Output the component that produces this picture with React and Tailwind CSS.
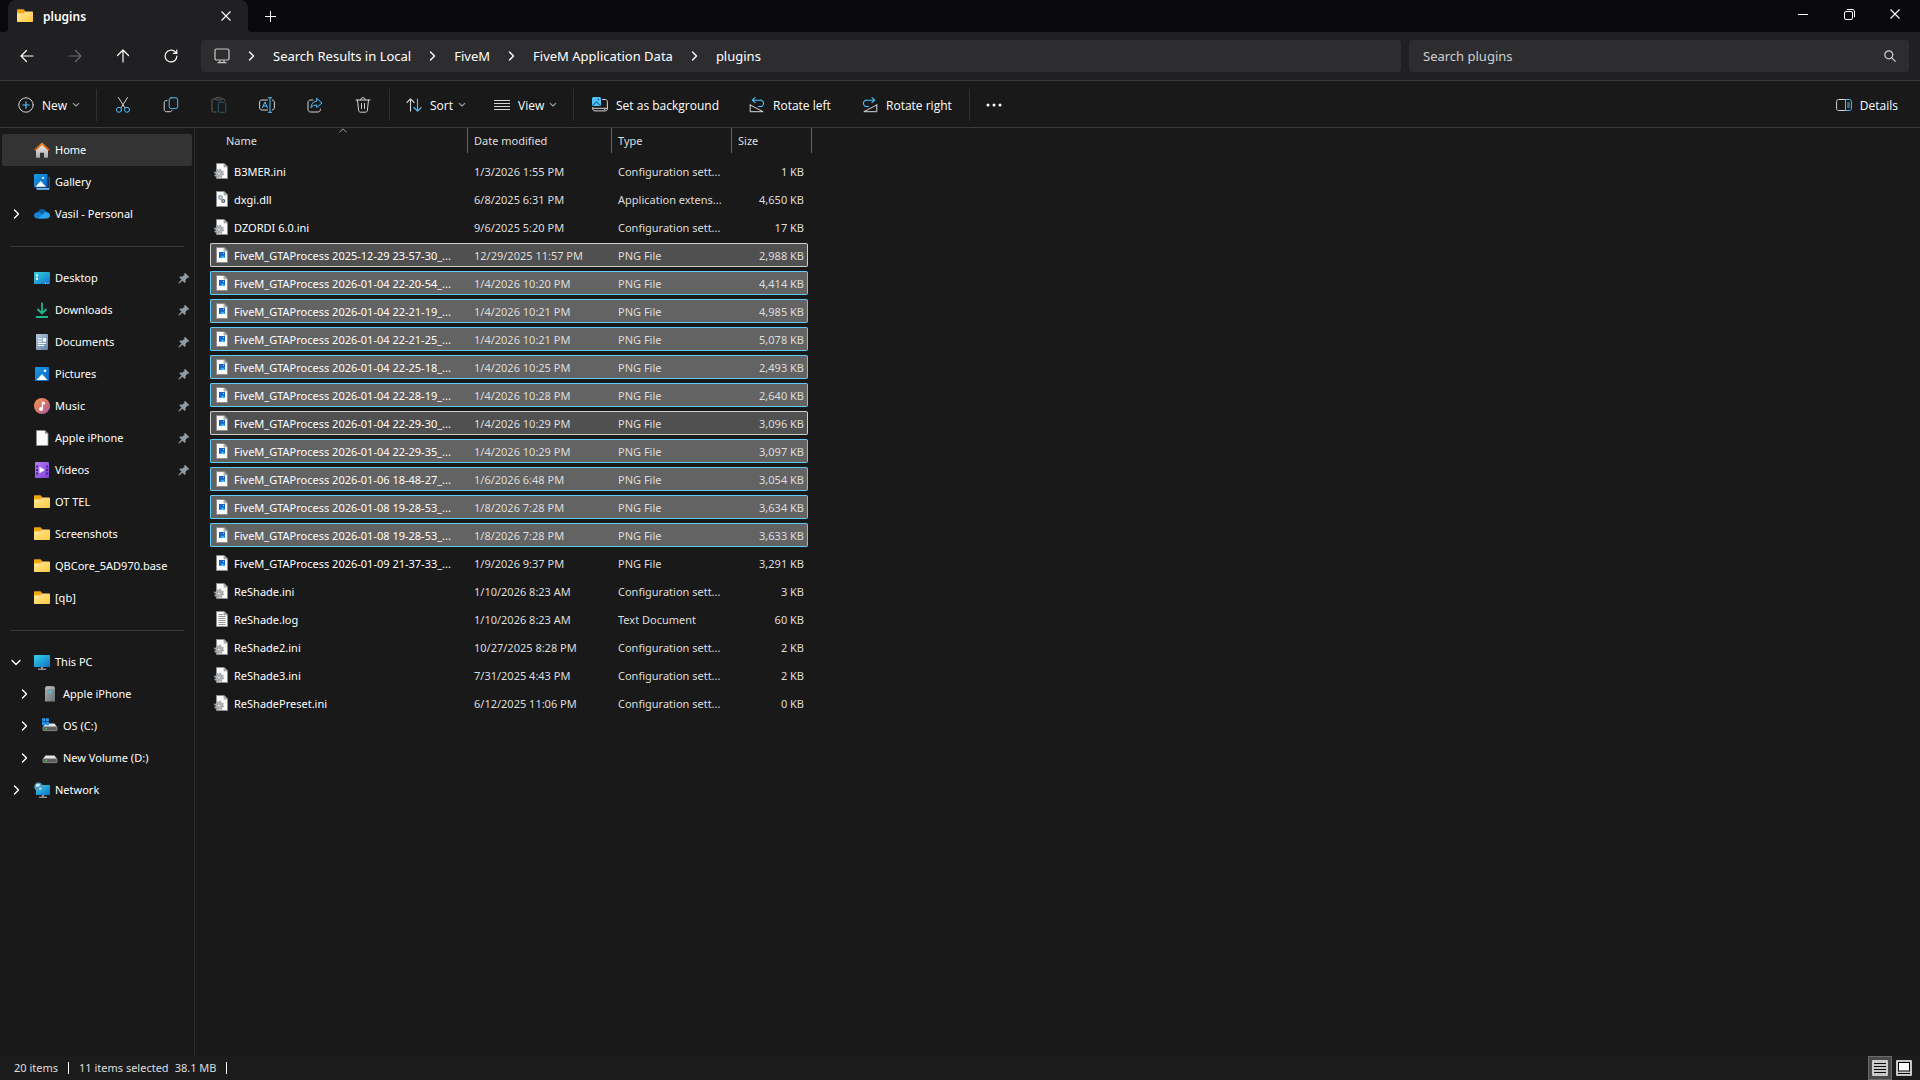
import React from 'react';

const toolbarBlue = '#4cc2ff';

// ---------- line icons ----------

const Svg = ({ size = 16, className = '', children, ...rest }) => (
  <svg width={size} height={size} viewBox="0 0 16 16" fill="none" stroke="currentColor" strokeLinecap="round" strokeLinejoin="round" aria-hidden="true" className={`shrink-0 ${className}`} {...rest}>
    {children}
  </svg>
);

const Chevron = ({ size = 12, className = '' }) => (
  <svg width={size} height={size} viewBox="0 0 12 12" fill="none" stroke="currentColor" strokeWidth="1.4" strokeLinecap="round" strokeLinejoin="round" aria-hidden="true" className={`shrink-0 ${className}`}>
    <path d="M4.500 2l4 4-4 4" />
  </svg>
);

const ChevronDown = () => (
  <svg width="8" height="8" viewBox="0 0 8 8" fill="none" stroke="#a0a0a0" strokeWidth="1.1" strokeLinecap="round" strokeLinejoin="round" aria-hidden="true" className="shrink-0">
    <path d="M1.2 2.3L4 5l2.800-2.700" />
  </svg>
);

const CloseIcon = ({ size = 10 }) => (
  <svg width={size} height={size} viewBox="0 0 10 10" stroke="currentColor" strokeWidth="1.1" aria-hidden="true">
    <path d="M.5.5l9 9M9.5.5l-9 9" />
  </svg>
);

const BackIcon = () => (
  <Svg strokeWidth="1.2"><path d="M14 8H2.2M7.5 2.5L2 8l5.5 5.5" /></Svg>
);

const ForwardIcon = () => (
  <Svg strokeWidth="1.2"><path d="M2 8h11.8M8.5 2.5L14 8l-5.5 5.5" /></Svg>
);

const UpIcon = () => (
  <Svg strokeWidth="1.2"><path d="M8 14V2.2M2.5 7.5L8 2l5.5 5.5" /></Svg>
);

const RefreshIcon = () => (
  <Svg strokeWidth="1.2"><path d="M13.9 8A5.9 5.9 0 1 1 12 3.7l1.6 1.6M13.8 2v3.4h-3.4" /></Svg>
);

const MonitorIcon = () => (
  <Svg stroke="#c8c8c8" strokeWidth="1.2"><path d="M2.6 1h10.8C14.400 1 15 1.700 15 2.600v7.800c0 .9-.6 1.600-1.600 1.600H2.600C1.600 12 1 11.300 1 10.400V2.600C1 1.700 1.600 1 2.600 1zM6 12.200v2M10 12.200v2M4 14.700h8" /></Svg>
);

const NewIcon = () => (
  <Svg stroke="#d6d6d6">
    <circle cx="8" cy="8" r="7.2" />
    <path stroke={toolbarBlue} strokeWidth="1.2" d="M8 4.800v6.400M4.800 8h6.400" />
  </Svg>
);

const CutIcon = () => (
  <Svg stroke="#d6d6d6">
    <path d="M3.500.6l6.300 10M12.500.6l-6.300 10" />
    <circle cx="4" cy="12.800" r="2.500" stroke={toolbarBlue} />
    <circle cx="12" cy="12.800" r="2.500" stroke={toolbarBlue} />
  </Svg>
);

const CopyIcon = () => (
  <Svg>
    <path stroke="#d6d6d6" d="M4 3.700H3C1.900 3.700 1.200 4.500 1.200 5.500v7c0 1.300.9 2.200 2.200 2.200h3.800c.8 0 1.500-.5 1.700-1.300" />
    <rect x="6.200" y=".8" width="8.500" height="10.800" rx="2" stroke={toolbarBlue} />
  </Svg>
);

const PasteIcon = () => (
  <Svg>
    <path stroke="#606060" d="M4.500 2H2.300C1.500 2 1 2.500 1 3.300v10.400c0 .8.5 1.300 1.300 1.300h2.900M11 2h1.500c.8 0 1.300.5 1.300 1.300M5.500.7h4c.6 0 1 .4 1 1s-.4 1.300-1 1.300h-4c-.6 0-1-.6-1-1.300s.4-1 1-1z" />
    <rect x="7.300" y="5.300" width="7.500" height="10" rx="1.400" stroke="#2b5a72" />
  </Svg>
);

const RenameIcon = () => (
  <Svg>
    <path stroke="#d6d6d6" d="M8.500 3H2.700C1.500 3 .6 3.900.6 5v6c0 1.100.9 2 2.100 2h5.800M13.300 3c1.200.2 2.100 1 2.100 2.200v5.600c0 1.200-.9 2-2.100 2.200" />
    <path stroke={toolbarBlue} d="M3.400 10.800L5.900 5l2.500 5.800M4.300 9h3.200M11 1v14M9.300.7h3.400M9.300 15.300h3.400" />
  </Svg>
);

const ShareIcon = () => (
  <Svg>
    <path stroke="#d6d6d6" d="M6 3H3.600C2.100 3 1 4.100 1 5.500v7C1 13.900 2.100 15 3.600 15h7.300c1.400 0 2.500-1.100 2.500-2.500V12" />
    <path stroke={toolbarBlue} d="M9.700 1.500L15 6l-5.300 4.500V8C7.200 7.900 5.300 8.900 4 10.800c.2-3.700 2.200-6.400 5.700-6.700V1.500z" />
  </Svg>
);

const DeleteIcon = () => (
  <Svg stroke="#d6d6d6"><path d="M1 3h14M5.700 3c0-1.400.9-2.300 2.300-2.300s2.300.9 2.300 2.300M2.500 3l1.100 10.300c.1 1.100.9 1.900 2 1.900h4.800c1.100 0 1.900-.8 2-1.900L13.500 3M6.500 6.500v5M9.500 6.500v5" /></Svg>
);

const SortIcon = () => (
  <Svg strokeWidth="1.1">
    <path stroke="#d6d6d6" d="M4.500 14V2M.9 5.500L4.500 1.900l3.600 3.600" />
    <path stroke={toolbarBlue} d="M11.500 2v12M7.900 10.500l3.600 3.600 3.600-3.600" />
  </Svg>
);

const ViewIcon = () => (
  <Svg stroke="#d6d6d6" strokeLinecap="butt"><path d="M0 3.500h16M0 6.500h16M0 9.500h16M0 12.500h16" /></Svg>
);

const BackgroundIcon = () => (
  <Svg>
    <path stroke="#d6d6d6" d="M10.500 2.500h2.700c1.300 0 2.200.9 2.200 2.200v7c0 1.300-.9 2.200-2.200 2.200H3C1.700 13.900.7 13 .7 11.700V10.500M1 11.300h14.300" />
    <rect x="0" y="0" width="9" height="9" rx="1.500" fill={toolbarBlue} stroke="none" />
    <path stroke="#17384a" d="M1.300 8l3.200-3.200L7.700 8" />
    <circle cx="6.300" cy="2.500" r=".8" fill="#17384a" stroke="none" />
    <circle cx="12.800" cy="12.600" r=".6" fill="#d6d6d6" stroke="none" />
  </Svg>
);

const RotateLeftIcon = () => (
  <Svg>
    <path stroke={toolbarBlue} strokeWidth="1.100" d="M3.500 3.200h7.300a3.200 3.200 0 1 1 0 6.300H9.500M6 .7L3.300 3.200 6 5.700" />
    <path stroke="#d6d6d6" d="M1.200 8v6.700h13L1.200 8z" />
  </Svg>
);

const RotateRightIcon = () => (
  <Svg>
    <path stroke={toolbarBlue} strokeWidth="1.100" d="M12.500 3.200H5.200a3.200 3.200 0 1 0 0 6.300h1.300M10 .7l2.700 2.500L10 5.700" />
    <path stroke="#d6d6d6" d="M14.800 8v6.700h-13l13-6.700z" />
  </Svg>
);

const DetailsIcon = () => (
  <Svg>
    <path stroke="#d6d6d6" d="M9.500 2.500h-7C1.400 2.500.6 3.300.6 4.500v7c0 1.200.8 2 1.900 2h7" />
    <path stroke={toolbarBlue} d="M9.500 2.500h4c1.100 0 1.900.8 1.900 2v7c0 1.200-.8 2-1.900 2h-4v-11zM11.500 6h2M11.500 8h2M11.500 10h2" />
  </Svg>
);

const SearchIcon = () => (
  <svg width="12" height="12" viewBox="0 0 12 12" fill="none" stroke="#d0d0d0" strokeWidth="1.2" strokeLinecap="round" aria-hidden="true">
    <circle cx="4.800" cy="4.800" r="4" />
    <path d="M7.800 7.800l3.500 3.500" />
  </svg>
);

const PinIcon = () => (
  <svg width="12" height="12" viewBox="0 0 12 12" fill="#8f9aa2" aria-hidden="true" className="shrink-0">
    <path d="M7 .8l4.300 4.200-.8.800-1-.1-2 2.200v2.300l-.9.700-2.200-2.200L1.300 11.500.5 11.300l.1-.8L3.500 7.600 1.300 5.400l.8-.9h2.400L6.500 2.500l-.2-1z" />
  </svg>
);

// ---------- colour icons ----------

const Pic = ({ children }) => (
  <svg width="16" height="16" viewBox="0 0 16 16" aria-hidden="true" className="shrink-0">{children}</svg>
);

const Gradients = () => (
  <svg width="0" height="0" className="absolute" aria-hidden="true">
    <defs>
      <linearGradient id="folder" x1="0" y1="0" x2="1" y2="1"><stop stopColor="#ffe9a0" /><stop offset="1" stopColor="#ffc83a" /></linearGradient>
      <linearGradient id="picture" x1="0" y1="0" x2="1" y2="1"><stop stopColor="#1a9bea" /><stop offset="1" stopColor="#0b63c0" /></linearGradient>
      <linearGradient id="screen" x1="0" y1="0" x2="1" y2="1"><stop stopColor="#35d4e4" /><stop offset="1" stopColor="#0e6fc8" /></linearGradient>
      <linearGradient id="house" x1="0" y1="0" x2="0" y2="1"><stop stopColor="#f0f0f0" /><stop offset="1" stopColor="#a9a9a9" /></linearGradient>
      <linearGradient id="roof" x1="0" y1="0" x2="0" y2="1"><stop stopColor="#f59a23" /><stop offset="1" stopColor="#cf4d12" /></linearGradient>
      <linearGradient id="paper" x1="0" y1="0" x2="1" y2="1"><stop stopColor="#b5c8da" /><stop offset="1" stopColor="#6484a5" /></linearGradient>
      <linearGradient id="music" x1="0" y1="0" x2="1" y2="1"><stop stopColor="#f49a55" /><stop offset=".55" stopColor="#d8706c" /><stop offset="1" stopColor="#9a5bb5" /></linearGradient>
      <linearGradient id="video" x1="0" y1="0" x2="1" y2="1"><stop stopColor="#b77cf8" /><stop offset="1" stopColor="#7c3fd6" /></linearGradient>
      <linearGradient id="phone" x1="0" y1="0" x2="1" y2="1"><stop stopColor="#a9b0b5" /><stop offset="1" stopColor="#6b747a" /></linearGradient>
    </defs>
  </svg>
);

const FolderIcon = () => (
  <Pic>
    <path d="M0 2.200C0 1.500.5 1.200 1 1.200h5.500l1.700 1.800H8v3H0z" fill="#f2a60c" />
    <path d="M0 5.200h6.500L8.200 3.500H15c.6 0 1 .4 1 1V13c0 .6-.4 1-1 1H1c-.6 0-1-.4-1-1z" fill="url(#folder)" />
  </Pic>
);

const HomeIcon = () => (
  <Pic>
    <path d="M2 7l6-5 6 5v8.200c0 .3-.2.500-.5.500H10v-5H6v5H2.500c-.3 0-.5-.2-.5-.5z" fill="url(#house)" />
    <path d="M8 .4l8 7.300-1.300 1.400L8 3.200 1.300 9.100 0 7.700z" fill="url(#roof)" />
  </Pic>
);

const GalleryIcon = () => (
  <Pic>
    <path d="M3 14h11.500V2.500H15c.6 0 1 .4 1 1V15c0 .6-.4 1-1 1H3.500c-.6 0-1-.4-1-1z" fill="#0c56a5" />
    <path d="M2.500 14H15v1.800H3.500c-.6 0-1-.5-1-1z" fill="#75b5ec" />
    <rect width="13.500" height="13.500" rx="1" fill="url(#picture)" />
    <path d="M1.500 12.700L6.700 7l5.300 5.700z" fill="#fff" />
    <circle cx="9" cy="4" r="1.100" fill="#fff" />
  </Pic>
);

const CloudIcon = () => (
  <Pic>
    <path d="M3.500 7C4 4.700 5.800 3 8.200 3c2 0 3.700 1.100 4.500 2.800L8 9z" fill="#0b5cad" />
    <path d="M3.300 6.300c1.600-.2 2.700.2 4 1.100L12 12.500H3.500C1.500 12.500 0 11.200 0 9.400c0-1.700 1.400-3 3.300-3.100z" fill="#1584da" />
    <path d="M4 12.300l5.500-4.800c1.500-1.700 3.500-1.700 4.500-.9 1.200.6 2 1.700 2 3 0 1.600-1.300 2.900-3 2.900H4.500z" fill="#2ba2ec" />
  </Pic>
);

const DesktopIcon = () => (
  <Pic>
    <rect y="2" width="16" height="12" rx="1" fill="url(#screen)" />
    <path d="M2 4.500h2v2H2zM2 7.800h2v2H2z" fill="#fff" />
    <path d="M11 12.700h1v1h-1zM13.500 12.700h1v1h-1z" fill="#d9f3ff" />
  </Pic>
);

const DownloadsIcon = () => (
  <Pic><path d="M8 .5V11M3.500 7L8 11.500 12.500 7M2 15h12" fill="none" stroke="#1fb58d" strokeWidth="1.800" /></Pic>
);

const DocumentsIcon = () => (
  <Pic>
    <rect x="2" width="12" height="16" rx="1" fill="url(#paper)" />
    <path d="M4 4.800h4M4 7.200h4M4 9.500h8M4 11.500h6" stroke="#fff" strokeWidth="1.100" />
    <path d="M9 4.200h3v3.500H9z" fill="#fff" />
  </Pic>
);

const PicturesIcon = () => (
  <Pic>
    <rect x="1" y="1" width="14" height="14" rx="1" fill="url(#picture)" />
    <path d="M2.500 14L8 8l5.500 6z" fill="#fff" />
    <circle cx="11" cy="4.800" r="1.300" fill="#fff" />
  </Pic>
);

const MusicIcon = () => (
  <Pic>
    <circle cx="8" cy="8" r="8" fill="url(#music)" />
    <circle cx="7" cy="11" r="2" fill="#fff" />
    <path d="M7.800 3.500l3.200.7v2.300L9 6.200V11H7.800z" fill="#fff" />
  </Pic>
);

const FileIcon = () => (
  <Pic><path d="M2.500.5H11l3 3v12H2.500z" fill="#fafafa" stroke="#8e8e8e" strokeWidth=".8" /><path d="M11 .5v3h3z" fill="#7d7d7d" /></Pic>
);

const VideosIcon = () => (
  <Pic>
    <rect x="1" width="14" height="16" rx="1" fill="url(#video)" />
    <path d="M2 3.500h2v2H2zM2 7h2v2H2zM2 10.500h2v2H2zM12 3.500h2v2h-2zM12 7h2v2h-2zM12 10.500h2v2h-2z" fill="#4d2299" />
    <path d="M5.500 4.800v6.400L11 8z" fill="#fff" />
  </Pic>
);

const PcIcon = () => (
  <Pic>
    <rect y="1" width="16" height="12" rx=".6" fill="url(#screen)" />
    <path d="M7 13h2v1.800H7z" fill="#9aa1a8" /><path d="M4 14.700h8v1H4z" fill="#c0c5ca" />
  </Pic>
);

const PhoneIcon = () => (
  <Pic>
    <path d="M4.500 0h7l1.500 1.500V15.500H3V1.500z" fill="url(#phone)" />
    <path d="M3.500 2h9" stroke="#c7ccd0" strokeWidth=".7" />
    <circle cx="8" cy="6.300" r="1.400" fill="#3ec5e8" />
  </Pic>
);

const Drive = () => (
  <>
    <path d="M3.500 5.500h9L15 9H1z" fill="#e4e4e4" />
    <rect x="1" y="8.600" width="14" height="4" rx=".7" fill="#5b5b5b" stroke="#a9a9a9" strokeWidth=".7" />
    <circle cx="4.200" cy="10.600" r=".8" fill="#44e060" />
  </>
);

const OsDriveIcon = () => (
  <Pic>
    <Drive />
    <path d="M0 .3h3.200v3.200H0zM3.700.3h3.200v3.200H3.700zM0 4h3.200v3.200H0zM3.700 4h3.200v3.200H3.700z" fill="#1d96ec" />
  </Pic>
);

const DriveIcon = () => <Pic><Drive /></Pic>;

const NetworkIcon = () => (
  <Pic>
    <rect x="2" y="3" width="14" height="10" rx=".5" fill="url(#screen)" />
    <path d="M8 13h2v1.800H8z" fill="#9aa1a8" /><path d="M5 14.700h8v1H5z" fill="#c0c5ca" />
    <circle cx="4.500" cy="4.800" r="4.300" fill="#4a9cc4" />
    <path d="M2 2.500c1.500-1 3.500-.8 4 .2S4.500 4.500 3.500 5 1.500 4 2 2.500zM5.500 6c1-.6 2-.5 2.200.2S6.500 8 5.700 7.700 5 6.500 5.500 6z" fill="#c4e8f5" />
  </Pic>
);

const Page = () => (
  <>
    <path d="M2.500.5H10l3.500 3.500v11.500h-11z" fill="#fafafa" stroke="#8e8e8e" />
    <path d="M10 .5V4h3.500z" fill="#bdbdbd" stroke="#8e8e8e" strokeWidth=".6" />
  </>
);

const IniIcon = () => (
  <Pic>
    <Page />
    <circle cx="5" cy="10.500" r="4" fill="none" stroke="#a4a8ac" strokeWidth="2" strokeDasharray="1.570 1.570" />
    <circle cx="5" cy="10.500" r="3.400" fill="#b8bbbe" stroke="#85898d" strokeWidth=".5" />
    <circle cx="5" cy="10.500" r="1.500" fill="#eceef0" stroke="#85898d" strokeWidth=".7" />
  </Pic>
);

const DllIcon = () => (
  <Pic>
    <Page />
    <circle cx="6.500" cy="6.500" r="1.700" fill="#e1e5ea" stroke="#94a0ac" strokeWidth="1.400" />
    <circle cx="9.300" cy="10" r="1.400" fill="#e1e5ea" stroke="#596572" strokeWidth="1.300" />
  </Pic>
);

const PngIcon = () => (
  <Pic>
    <Page />
    <rect x="5" y="5" width="6" height="6" fill="#1565c8" />
    <path d="M5.500 11l3-2.700L11 10.500v.5z" fill="#45b4f5" />
    <path d="M9 6h1v1H9z" fill="#bfe3ff" />
  </Pic>
);

const LogIcon = () => (
  <Pic>
    <Page />
    <path d="M4.500 3.500H9M4.500 5.500h7M4.500 7.500h7M4.500 9.500h7M4.500 11.500h7M4.500 13.500h7" stroke="#8a8a8a" strokeWidth=".9" />
  </Pic>
);

// ---------- data ----------

const sidebarTop = [
  { label: 'Home', icon: HomeIcon, active: true },
  { label: 'Gallery', icon: GalleryIcon },
  { label: 'Vasil - Personal', icon: CloudIcon, arrow: 'right' },
];

const quickAccess = [
  { label: 'Desktop', icon: DesktopIcon, pinned: true },
  { label: 'Downloads', icon: DownloadsIcon, pinned: true },
  { label: 'Documents', icon: DocumentsIcon, pinned: true },
  { label: 'Pictures', icon: PicturesIcon, pinned: true },
  { label: 'Music', icon: MusicIcon, pinned: true },
  { label: 'Apple iPhone', icon: FileIcon, pinned: true },
  { label: 'Videos', icon: VideosIcon, pinned: true },
  { label: 'OT TEL', icon: FolderIcon },
  { label: 'Screenshots', icon: FolderIcon },
  { label: 'QBCore_5AD970.base', icon: FolderIcon },
  { label: '[qb]', icon: FolderIcon },
];

const devices = [
  { label: 'This PC', icon: PcIcon, arrow: 'down' },
  { label: 'Apple iPhone', icon: PhoneIcon, arrow: 'right', nested: true },
  { label: 'OS (C:)', icon: OsDriveIcon, arrow: 'right', nested: true },
  { label: 'New Volume (D:)', icon: DriveIcon, arrow: 'right', nested: true },
  { label: 'Network', icon: NetworkIcon, arrow: 'right' },
];

const fileTypes = {
  ini: { icon: IniIcon, label: 'Configuration sett...' },
  dll: { icon: DllIcon, label: 'Application extens...' },
  png: { icon: PngIcon, label: 'PNG File' },
  log: { icon: LogIcon, label: 'Text Document' },
};

const files = [
  { name: 'B3MER.ini', date: '1/3/2026 1:55 PM', type: 'ini', size: '1 KB' },
  { name: 'dxgi.dll', date: '6/8/2025 6:31 PM', type: 'dll', size: '4,650 KB' },
  { name: 'DZORDI 6.0.ini', date: '9/6/2025 5:20 PM', type: 'ini', size: '17 KB' },
  { name: 'FiveM_GTAProcess 2025-12-29 23-57-30_...', date: '12/29/2025 11:57 PM', type: 'png', size: '2,988 KB', state: 'focused' },
  { name: 'FiveM_GTAProcess 2026-01-04 22-20-54_...', date: '1/4/2026 10:20 PM', type: 'png', size: '4,414 KB', state: 'selected' },
  { name: 'FiveM_GTAProcess 2026-01-04 22-21-19_...', date: '1/4/2026 10:21 PM', type: 'png', size: '4,985 KB', state: 'selected' },
  { name: 'FiveM_GTAProcess 2026-01-04 22-21-25_...', date: '1/4/2026 10:21 PM', type: 'png', size: '5,078 KB', state: 'selected' },
  { name: 'FiveM_GTAProcess 2026-01-04 22-25-18_...', date: '1/4/2026 10:25 PM', type: 'png', size: '2,493 KB', state: 'selected' },
  { name: 'FiveM_GTAProcess 2026-01-04 22-28-19_...', date: '1/4/2026 10:28 PM', type: 'png', size: '2,640 KB', state: 'selected' },
  { name: 'FiveM_GTAProcess 2026-01-04 22-29-30_...', date: '1/4/2026 10:29 PM', type: 'png', size: '3,096 KB', state: 'focused' },
  { name: 'FiveM_GTAProcess 2026-01-04 22-29-35_...', date: '1/4/2026 10:29 PM', type: 'png', size: '3,097 KB', state: 'selected' },
  { name: 'FiveM_GTAProcess 2026-01-06 18-48-27_...', date: '1/6/2026 6:48 PM', type: 'png', size: '3,054 KB', state: 'selected' },
  { name: 'FiveM_GTAProcess 2026-01-08 19-28-53_...', date: '1/8/2026 7:28 PM', type: 'png', size: '3,634 KB', state: 'selected' },
  { name: 'FiveM_GTAProcess 2026-01-08 19-28-53_...', date: '1/8/2026 7:28 PM', type: 'png', size: '3,633 KB', state: 'selected' },
  { name: 'FiveM_GTAProcess 2026-01-09 21-37-33_...', date: '1/9/2026 9:37 PM', type: 'png', size: '3,291 KB' },
  { name: 'ReShade.ini', date: '1/10/2026 8:23 AM', type: 'ini', size: '3 KB' },
  { name: 'ReShade.log', date: '1/10/2026 8:23 AM', type: 'log', size: '60 KB' },
  { name: 'ReShade2.ini', date: '10/27/2025 8:28 PM', type: 'ini', size: '2 KB' },
  { name: 'ReShade3.ini', date: '7/31/2025 4:43 PM', type: 'ini', size: '2 KB' },
  { name: 'ReShadePreset.ini', date: '6/12/2025 11:06 PM', type: 'ini', size: '0 KB' },
];

const rowStyles = {
  none: 'border-transparent',
  selected: 'border-[#60cdff] bg-[#636363]',
  focused: 'border-[#d0d0d0] bg-[#505050]',
};

// ---------- parts ----------

const TitleBar = () => (
  <header className="flex h-8 items-stretch bg-[#08080d] pl-2">
    <div className="relative flex w-60 items-center rounded-t-lg bg-[#202022] pl-[9px] pr-3">
      <svg width="4" height="4" viewBox="0 0 4 4" className="absolute -left-1 bottom-0" aria-hidden="true"><path d="M4 0v4H0a4 4 0 0 0 4-4z" fill="#202022" /></svg>
      <svg width="4" height="4" viewBox="0 0 4 4" className="absolute -right-1 bottom-0" aria-hidden="true"><path d="M0 0v4h4a4 4 0 0 1-4-4z" fill="#202022" /></svg>
      <FolderIcon />
      <span className="ml-[10px] flex-1 pt-px text-xs font-semibold">plugins</span>
      <button type="button" aria-label="Close tab" className="flex size-5 items-center justify-center"><CloseIcon /></button>
    </div>
    <button type="button" aria-label="New tab" className="ml-1 flex w-9 items-center justify-center">
      <svg width="11" height="11" viewBox="0 0 11 11" stroke="currentColor" aria-hidden="true"><path d="M5.500 0v11M0 5.500h11" /></svg>
    </button>
    <div className="ml-auto flex h-7 items-stretch pr-[2px]">
      <button type="button" aria-label="Minimize" className="flex w-[46px] items-center justify-center">
        <svg width="10" height="10" viewBox="0 0 10 10" stroke="currentColor" aria-hidden="true"><path d="M0 5.500h10" /></svg>
      </button>
      <button type="button" aria-label="Restore" className="flex w-[46px] items-center justify-center">
        <svg width="11" height="11" viewBox="0 0 11 11" fill="none" stroke="currentColor" aria-hidden="true">
          <rect x=".5" y="2.500" width="8" height="8" rx="1.500" />
          <path d="M2.800.5h5.200c1.500 0 2.500 1 2.500 2.500v5.200" />
        </svg>
      </button>
      <button type="button" aria-label="Close" className="flex w-[46px] items-center justify-center"><CloseIcon /></button>
    </div>
  </header>
);

const crumbs = ['Search Results in Local', 'FiveM', 'FiveM Application Data', 'plugins'];

const AddressBar = () => (
  <div className="box-content flex h-12 items-center border-b border-[#3a3a3a] bg-[#202022] pl-[3px] pr-[11px]">
    <button type="button" aria-label="Back" className="flex h-8 w-12 items-center justify-center"><BackIcon /></button>
    <button type="button" aria-label="Forward" disabled className="flex h-8 w-12 items-center justify-center text-[#6a6a6a]"><ForwardIcon /></button>
    <button type="button" aria-label="Up" className="flex h-8 w-12 items-center justify-center"><UpIcon /></button>
    <button type="button" aria-label="Refresh" className="flex h-8 w-12 items-center justify-center"><RefreshIcon /></button>
    <div className="ml-[6px] grid flex-1 grid-cols-[12fr_5fr] gap-2">
      <nav aria-label="Address" className="flex h-8 items-center rounded bg-[#2d2d2f] pl-[13px] text-[13px]">
        <MonitorIcon />
        {crumbs.map((crumb) => (
          <React.Fragment key={crumb}>
            <Chevron className="ml-[15px] mr-4" />
            <a href="#" className="whitespace-nowrap pt-px">{crumb}</a>
          </React.Fragment>
        ))}
      </nav>
      <div className="flex h-8 items-center rounded bg-[#2d2d2f] pl-[14px] pr-[13px]">
        <input type="search" aria-label="Search plugins" placeholder="Search plugins" className="min-w-0 flex-1 bg-transparent pt-px text-[13px] outline-none placeholder:text-[#cfcfcf]" />
        <SearchIcon />
      </div>
    </div>
  </div>
);

const IconButton = ({ label, icon: Icon, disabled }) => (
  <button type="button" aria-label={label} disabled={disabled} className="flex h-8 w-12 items-center justify-center"><Icon /></button>
);

const LabelButton = ({ label, icon: Icon, menu, className = '' }) => (
  <button type="button" className={`flex h-8 items-center whitespace-nowrap ${className}`}>
    <Icon />
    <span className="ml-2 mr-[5px] pt-px">{label}</span>
    {menu && <ChevronDown />}
  </button>
);

const Divider = () => <span className="h-8 w-px bg-[#303030]" />;

const Toolbar = () => (
  <div role="toolbar" aria-label="Commands" className="flex h-[47px] items-center border-b border-[#3a3a3a] bg-[#191919] pt-[2px] font-['Open_Sans','Noto_Sans',sans-serif] text-xs font-medium">
    <LabelButton label="New" icon={NewIcon} menu className="w-24 pl-[18px]" />
    <Divider />
    <div className="flex px-[2px]">
      <IconButton label="Cut" icon={CutIcon} />
      <IconButton label="Copy" icon={CopyIcon} />
      <IconButton label="Paste" icon={PasteIcon} disabled />
      <IconButton label="Rename" icon={RenameIcon} />
      <IconButton label="Share" icon={ShareIcon} />
      <IconButton label="Delete" icon={DeleteIcon} />
    </div>
    <Divider />
    <LabelButton label="Sort" icon={SortIcon} menu className="w-[88px] pl-4" />
    <LabelButton label="View" icon={ViewIcon} menu className="w-[95px] pl-4" />
    <Divider />
    <LabelButton label="Set as background" icon={BackgroundIcon} className="w-[158px] pl-[18px]" />
    <LabelButton label="Rotate left" icon={RotateLeftIcon} className="w-[113px] pl-[17px]" />
    <LabelButton label="Rotate right" icon={RotateRightIcon} className="w-[124px] pl-[17px]" />
    <Divider />
    <button type="button" aria-label="See more" className="flex h-8 w-12 items-center justify-center">
      <svg width="16" height="4" viewBox="0 0 16 4" fill="currentColor" aria-hidden="true"><circle cx="2" cy="2" r="1.500" /><circle cx="8" cy="2" r="1.500" /><circle cx="14" cy="2" r="1.500" /></svg>
    </button>
    <LabelButton label="Details" icon={DetailsIcon} className="ml-auto pr-[17px]" />
  </div>
);

const SidebarItem = ({ item }) => {
  const { label, icon: Icon, active, pinned, arrow, nested } = item;

  return (
    <li>
      <a href="#" aria-current={active ? 'page' : undefined} className={`flex h-8 items-center rounded-[2px] pr-[2px] ${nested ? 'pl-4' : 'pl-2'} ${active ? 'bg-[#333333]' : ''}`}>
        <span className="mr-3 flex w-3 shrink-0">
          {arrow && <Chevron className={arrow === 'down' ? 'rotate-90' : ''} />}
        </span>
        <Icon />
        <span className="ml-[5px] flex-1 whitespace-nowrap">{label}</span>
        {pinned && <PinIcon />}
      </a>
    </li>
  );
};

const SidebarGroup = ({ items }) => (
  <ul>
    {items.map((item) => <SidebarItem key={item.label} item={item} />)}
  </ul>
);

const SidebarRule = () => (
  <div className="flex h-8 items-center pl-2 pr-2"><span className="h-px flex-1 bg-[#3a3a3a]" /></div>
);

const Sidebar = () => (
  <nav aria-label="Folders" className="w-[195px] shrink-0 border-r border-[#2e2e2e] pl-[2px] pr-[2px] pt-[6px] text-[11px]">
    <SidebarGroup items={sidebarTop} />
    <SidebarRule />
    <SidebarGroup items={quickAccess} />
    <SidebarRule />
    <SidebarGroup items={devices} />
  </nav>
);

const HeaderCell = ({ label, colSpan, sorted, className }) => (
  <th scope="col" colSpan={colSpan} aria-sort={sorted ? 'ascending' : undefined} className="p-0 pb-[2px] text-left font-normal">
    <div className={`relative flex h-[25px] items-center border-r border-[#636363] pt-px ${className}`}>
      {label}
      {sorted && (
        <svg width="8" height="5" viewBox="0 0 8 5" fill="none" stroke="#a0a0a0" aria-hidden="true" className="absolute left-1/2 top-0"><path d="M.5 4.300L4 .8l3.500 3.500" /></svg>
      )}
    </div>
  </th>
);

const FileRow = ({ file }) => {
  const { icon: Icon, label } = fileTypes[file.type];
  const row = rowStyles[file.state || 'none'];

  return (
    <tr aria-selected={Boolean(file.state)} className="h-6 text-[#dedede]">
      <td className={`rounded-l-[2px] border-y border-l p-0 pl-[3px] ${row}`}>
        <div className="flex items-center gap-1 whitespace-nowrap text-white">
          <Icon />
          <span className="pt-[2px]">{file.name}</span>
        </div>
      </td>
      <td className={`whitespace-nowrap border-y p-0 pl-[6px] pt-[2px] ${row}`}>{file.date}</td>
      <td className={`whitespace-nowrap border-y p-0 pl-[6px] pt-[2px] ${row}`}>{label}</td>
      <td className={`whitespace-nowrap rounded-r-[2px] border-y border-r p-0 pr-[3px] pt-[2px] text-right ${row}`}>{file.size}</td>
      <td className="p-0" />
    </tr>
  );
};

const FileList = () => (
  <main className="min-w-0 flex-1 pl-[15px]">
    <table className="-mt-1 w-[602px] table-fixed border-separate border-spacing-x-0 border-spacing-y-1 text-[11px]">
      <colgroup>
        <col className="w-[258px]" />
        <col className="w-36" />
        <col className="w-[120px]" />
        <col className="w-[76px]" />
        <col className="w-1" />
      </colgroup>
      <thead>
        <tr className="text-[#dedede]">
          <HeaderCell label="Name" sorted className="pl-4" />
          <HeaderCell label="Date modified" className="pl-[6px]" />
          <HeaderCell label="Type" className="pl-[6px]" />
          <HeaderCell label="Size" colSpan={2} className="pl-[6px]" />
        </tr>
      </thead>
      <tbody>
        {files.map((file, i) => <FileRow key={i} file={file} />)}
      </tbody>
    </table>
  </main>
);

const StatusBar = () => (
  <footer className="flex h-6 items-center bg-[#1c1c1c] pl-[14px] pr-2 text-[11px] text-[#dedede]">
    <span>20 items</span>
    <span className="mx-[10px] h-3 w-px bg-white" />
    <span>11 items selected</span>
    <span className="ml-[6px]">38.1 MB</span>
    <span className="mx-[10px] h-3 w-px bg-white" />
    <div className="ml-auto flex items-center gap-1">
      <button type="button" aria-label="Details view" aria-pressed="true" className="flex size-6 items-center justify-center border border-[#6a6a6a] bg-[#4a4a4a]">
        <Pic>
          <rect width="16" height="16" rx="1" fill="#c8c8c8" />
          <path d="M2 3.500h12M2 6.500h12M2 9.500h12M2 12.500h12" stroke="#000" />
        </Pic>
      </button>
      <button type="button" aria-label="Large icons view" className="flex items-center">
        <Pic>
          <rect width="16" height="16" rx="1" fill="#c8c8c8" />
          <rect x="2.500" y="2.500" width="11" height="8.500" fill="#fff" stroke="#000" />
          <path d="M2 13.500h12" stroke="#000" />
        </Pic>
      </button>
    </div>
  </footer>
);

const App = () => (
  <div className="flex min-h-screen flex-col bg-[#191919] font-['Noto_Sans','Open_Sans',sans-serif] text-white">
    <Gradients />
    <TitleBar />
    <AddressBar />
    <Toolbar />
    <div className="flex flex-1">
      <Sidebar />
      <FileList />
    </div>
    <StatusBar />
  </div>
);

export default App;
